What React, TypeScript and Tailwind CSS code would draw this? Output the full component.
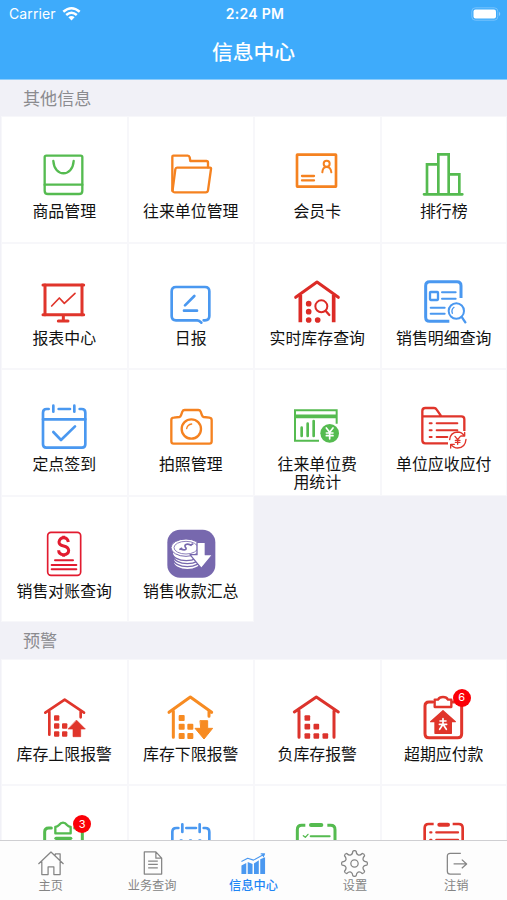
import { ReactNode } from "react";
import { twMerge } from "tailwind-merge";

type Tile = {
  label: string;
  icon: ReactNode;
  badge?: number;
};

const GREEN = "#55bb50";
const ORANGE = "#f58220";
const RED = "#e0352b";
const BLUE = "#4a98f0";

const Glyph = ({
  color,
  width = 7,
  children,
}: {
  color: string;
  width?: number;
  children: ReactNode;
}) => (
  <svg
    className="w-12 h-12 overflow-visible"
    viewBox="0 0 144 144"
    fill="none"
    stroke={color}
    strokeWidth={width}
    strokeLinecap="round"
    strokeLinejoin="round"
    aria-hidden="true"
  >
    {children}
  </svg>
);

const Squares = ({
  points,
  size,
  color,
}: {
  points: number[][];
  size: number;
  color: string;
}) => (
  <g fill={color} stroke="none">
    {points.map(([x, y]) => (
      <rect
        key={`${x}-${y}`}
        x={x - size / 2}
        y={y - size / 2}
        width={size}
        height={size}
        rx="3"
      />
    ))}
  </g>
);

const BagIcon = () => (
  <Glyph color={GREEN}>
    <path d="M19 17H122q5 0 5 5V122q0 10-10 10H24q-10 0-10-10V22q0-5 5-5Z" />
    <path d="M14 104H127M40 33C43 82 98 82 101 33" />
  </Glyph>
);

const FolderIcon = () => (
  <Glyph color={ORANGE}>
    <path d="M16 122V20q0-3 3-3H62q5 0 6 5l2 11H118q5 0 5 5V52" />
    <path d="M30 53H129q4 0 3 4L123 121q-1 6-7 6H23q-7 0-6-8L25 58q1-5 5-5Z" />
  </Glyph>
);

const CardIcon = () => (
  <Glyph color={ORANGE}>
    <rect x="12" y="14" width="117" height="96" rx="1" strokeWidth="8" />
    <path d="M27 78H63M27 91H63" />
    <g strokeWidth="6">
      <circle cx="101" cy="41" r="9" />
      <path d="M88 67q1-16 13-16t14 16" />
    </g>
  </Glyph>
);

const RankIcon = () => (
  <Glyph color={GREEN} width={8}>
    <path
      d="M12 133H127M21 133V43H55M55 133V13H86V133M86 73H118V133"
      strokeLinejoin="miter"
    />
  </Glyph>
);

const BoardIcon = () => (
  <Glyph color={RED} width={9}>
    <path d="M9 24H131M9 113H131M70 114V130M55 132H84" />
    <path d="M15 24V113M126 24V113" />
    <path d="M35 87L58 63L73 79L105 49" strokeWidth="5" />
  </Glyph>
);

const DiaryIcon = () => (
  <Glyph color={BLUE} width={8}>
    <path d="M110 130H114q13 0 13-13V43q0-13-13-13H27q-13 0-13 13V117q0 13 13 13H91q6 0 12 7" />
    <path d="M54 85L82 57M51 101H90" />
  </Glyph>
);

const StockSearchIcon = () => (
  <Glyph color="#dc2b26" width={9}>
    <path d="M8 61L72 15L136 61" />
    <path d="M22 54V136M122 54V136" strokeLinecap="butt" strokeWidth="11" />
    <g fill="#dc2b26" stroke="none">
      <circle cx="47" cy="80" r="8.5" />
      <circle cx="47" cy="104" r="8.5" />
      <circle cx="47" cy="129" r="8.5" />
      <circle cx="74" cy="129" r="8.5" />
    </g>
    <circle cx="85" cy="88" r="18" strokeWidth="6" />
    <path d="M99 103L109 114" strokeWidth="7" />
  </Glyph>
);

const SalesDetailIcon = () => (
  <Glyph color={BLUE} width={9}>
    <path
      d="M123 63V26q0-12-12-12H29q-12 0-12 12V121q0 12 12 12H88"
      strokeLinecap="butt"
    />
    <g strokeWidth="6">
      <rect x="30" y="45" width="24" height="24" rx="2" strokeWidth="7" />
      <path d="M66 46H107M66 65H107M32 92H74M32 110H74" />
      <circle cx="109" cy="102" r="23" />
      <path d="M97 109q-4-11 5-18" strokeWidth="4" />
      <path d="M126 121L136 136" strokeWidth="7" />
    </g>
  </Glyph>
);

const CheckInIcon = () => (
  <Glyph color={BLUE} width={8}>
    <path d="M26 18H20q-11 0-11 11V124q0 10 10 10H126q10 0 10-10V29q0-11-11-11H119M56 18H90" />
    <path d="M40 8V26M103 8V26M9 49H136" />
    <path d="M40 87L63 111L105 70" />
  </Glyph>
);

const CameraIcon = () => (
  <Glyph color={ORANGE} width={7}>
    <path d="M20 44L37 42q4-1 5-5l4-11q2-5 7-5H94q5 0 7 5l4 11q1 4 5 5l17 2q7 1 7 7V115q0 7-7 7H20q-7 0-7-7V51q0-7 7-7Z" />
    <circle cx="73" cy="78" r="29" />
    <path d="M59 77q2-12 15-14" strokeWidth="4" />
  </Glyph>
);

const CostStatsIcon = () => (
  <Glyph color={GREEN} width={6}>
    <path
      d="M78 113H6V22H131V62"
      strokeLinecap="butt"
      strokeLinejoin="miter"
    />
    <path d="M6 40H131" strokeWidth="11" strokeLinecap="butt" />
    <path d="M26 74V99M44 62V99M62 54V99" strokeWidth="8" />
    <circle cx="110" cy="91" r="28" fill={GREEN} stroke="none" />
    <path
      d="M100 75L110 88L120 75M110 89V108M100 90H120M100 98H120"
      stroke="#fff"
      strokeWidth="5"
    />
  </Glyph>
);

const ReceivableIcon = () => (
  <Glyph color={RED}>
    <path
      d="M84 121H16q-9 0-9-9V24q0-9 9-9H42q5 0 8 5l14 20H124q9 0 9 9V84M7 40H64"
      strokeLinecap="butt"
    />
    <path
      d="M29 61H35M29 82H35M29 102H35M50 61H112M50 82H112M50 102H82"
      strokeWidth="6"
    />
    <g strokeWidth="4">
      <path d="M89 110q2-22 24-23q12 0 20 11M134 88V99H123" />
      <path d="M138 109q-2 25-25 26q-12 0-20-11M92 135V124H103" />
      <path d="M105 100L113 110L121 100M113 110V124M106 112H120M106 118H120" />
    </g>
  </Glyph>
);

const StatementIcon = () => (
  <Glyph color="#e21b2f" width={5}>
    <rect x="23" y="7" width="99" height="129" rx="10" />
    <path
      d="M85 36q-2-13-14-13t-14 13q0 9 14 12t15 13q0 13-15 13t-15-13M71 17V24M71 74V80"
      strokeWidth="9"
      strokeLinecap="butt"
    />
    <path d="M45 91H99M35 105H109M35 118H109" strokeWidth="6" />
  </Glyph>
);

const CollectionIcon = () => (
  <Glyph color="#fff" width={4}>
    <rect
      x="1"
      y="-1"
      width="144"
      height="144"
      rx="38"
      fill="#7768ae"
      stroke="none"
    />
    {[95, 86, 77, 68].map((y) => (
      <ellipse
        key={y}
        cx={y > 70 ? 61 : 58}
        cy={y}
        rx="42"
        ry="24"
        fill="#fff"
        stroke="#7768ae"
      />
    ))}
    <ellipse
      cx="57"
      cy="53"
      rx="45"
      ry="26"
      fill="#fff"
      stroke="#7768ae"
      strokeWidth="3"
    />
    <ellipse
      cx="57"
      cy="53"
      rx="36"
      ry="19"
      stroke="#7768ae"
      strokeWidth="2.5"
    />
    <path
      d="M72 46q-13-7-18 0q-1 4 3 8q2 9-17 3M39 58l5-3M71 45l6-3"
      stroke="#7768ae"
      strokeWidth="5"
    />
    <path
      d="M90 37H115V74H137L103 115L69 74H90Z"
      fill="#fff"
      stroke="#7768ae"
      strokeWidth="4"
    />
  </Glyph>
);

const StockUpperIcon = () => (
  <Glyph color={RED} width={8}>
    <path d="M16 59L74 20L132 59M28 56V125M122 56V73" />
    <Squares
      color={RED}
      size={16}
      points={[
        [50, 75],
        [50, 99],
        [50, 123],
        [74, 99],
        [74, 123],
      ]}
    />
    <path
      d="M110 82L136 108H122V131H99V108H85Z"
      fill={RED}
      strokeWidth="2"
    />
  </Glyph>
);

const StockLowerIcon = () => (
  <Glyph color="#f78b22" width={9}>
    <path d="M6 58L70 12L134 58M19 54V133M126 54V70" />
    <Squares
      color="#f78b22"
      size={18}
      points={[
        [44, 75],
        [44, 101],
        [44, 129],
        [70, 101],
        [70, 129],
      ]}
    />
    <path
      d="M100 83H122V106H137L111 138L84 106H100Z"
      fill="#f78b22"
      strokeWidth="3"
    />
  </Glyph>
);

const StockNegativeIcon = () => (
  <Glyph color="#dc332c" width={9}>
    <path d="M4 57L70 12L136 57M18 53V133M123 53V133" />
    <Squares
      color="#dc332c"
      size={17}
      points={[
        [43, 75],
        [43, 101],
        [43, 129],
        [70, 101],
        [70, 129],
        [97, 129],
      ]}
    />
  </Glyph>
);

const OverdueIcon = () => (
  <Glyph color={RED} width={9}>
    <path d="M38 27H27q-12 0-12 12V122q0 12 12 12H113q12 0 12-12V39q0-12-12-12H98" />
    <path
      d="M44 42V20H54q4-8 15-8t15 8H94V42Z"
      fill="#fff"
      strokeWidth="7"
    />
    <path
      d="M69 53L106 86H94V121H45V86H32Z"
      fill={RED}
      strokeWidth="4"
    />
    <path
      d="M60 84H78M58 94H80M69 77V94L59 109M69 94L79 109"
      stroke="#fff"
      strokeWidth="5"
    />
  </Glyph>
);

const ClipGreenIcon = () => (
  <Glyph color={GREEN} width={9}>
    <path d="M34 27H26q-12 0-12 12V130H127V39q0-12-12-12H104" />
    <path
      d="M46 43V24q7-1 11-6q5-7 12-7t12 7q4 5 11 6V43Z"
      fill="#fff"
      strokeWidth="7"
    />
    <path d="M48 58H92" strokeWidth="10" />
  </Glyph>
);

const CalendarIcon = () => (
  <Glyph color={BLUE} width={8}>
    <path d="M34 27H28q-12 0-12 12V130H127V39q0-12-12-12H110M58 27H87" />
    <path d="M46 16V39M98 16V39" />
    <path d="M41 65H44M69 65H72M97 65H100" />
  </Glyph>
);

const ChecklistIcon = () => (
  <Glyph color={GREEN} width={9}>
    <path
      d="M37 19H26q-13 0-13 13V130H126V32q0-13-13-13H103"
      strokeLinecap="butt"
    />
    <path d="M54 18H85" strokeWidth="12" />
    <path d="M31 50L37 55L45 46" strokeWidth="4" />
    <path d="M53 52H110" strokeWidth="6" />
  </Glyph>
);

const ListIcon = () => (
  <Glyph color={RED} width={8}>
    <path
      d="M41 15H26q-12 0-12 12V130H128V27q0-12-12-12H98"
      strokeLinecap="butt"
    />
    <path d="M58 17H84" strokeWidth="12" />
    <path d="M31 40H34M49 40H114M31 63H34M49 63H114" strokeWidth="7" />
  </Glyph>
);

const otherTiles: Tile[] = [
  { label: "商品管理", icon: <BagIcon /> },
  { label: "往来单位管理", icon: <FolderIcon /> },
  { label: "会员卡", icon: <CardIcon /> },
  { label: "排行榜", icon: <RankIcon /> },
  { label: "报表中心", icon: <BoardIcon /> },
  { label: "日报", icon: <DiaryIcon /> },
  { label: "实时库存查询", icon: <StockSearchIcon /> },
  { label: "销售明细查询", icon: <SalesDetailIcon /> },
  { label: "定点签到", icon: <CheckInIcon /> },
  { label: "拍照管理", icon: <CameraIcon /> },
  { label: "往来单位费\n用统计", icon: <CostStatsIcon /> },
  { label: "单位应收应付", icon: <ReceivableIcon /> },
  { label: "销售对账查询", icon: <StatementIcon /> },
  { label: "销售收款汇总", icon: <CollectionIcon /> },
];

// the last row is cut off by the tab bar, its labels are never visible
const warningTiles: Tile[] = [
  { label: "库存上限报警", icon: <StockUpperIcon /> },
  { label: "库存下限报警", icon: <StockLowerIcon /> },
  { label: "负库存报警", icon: <StockNegativeIcon /> },
  { label: "超期应付款", icon: <OverdueIcon />, badge: 6 },
  { label: "", icon: <ClipGreenIcon />, badge: 3 },
  { label: "", icon: <CalendarIcon /> },
  { label: "", icon: <ChecklistIcon /> },
  { label: "", icon: <ListIcon /> },
];

const tabs = [
  {
    label: "主页",
    icon: (
      <path d="M1.5 14.5L14.5 2L27.5 14.5M5 12V25.5H11.5V17.5H17.5V25.5H24V12M19 5.5V4H24V10.5" />
    ),
  },
  {
    label: "业务查询",
    icon: (
      <path d="M5.5 2H17.5L23.5 8.5V25H5.5ZM17.5 2V8.5H23.5M9.5 11.5H19.5M9.5 15H19.5M9.5 18.5H19.5" />
    ),
  },
  {
    label: "信息中心",
    active: true,
    icon: (
      <g className="text-[#4a98f0]">
        <path
          d="M1.5 25V16L6.5 13.5V25ZM8 25V12.5L13 14.5V25ZM14.5 25V14L19.5 10.5V25ZM21 25V9.5L26 7.5V25Z"
          fill="currentColor"
          stroke="none"
        />
        <path
          d="M1.5 12L8 8.5L14 10.5L25 4.5M21.5 4H25.5L24 7.5"
          stroke="currentColor"
          strokeWidth="1.1"
        />
      </g>
    ),
  },
  {
    label: "设置",
    icon: (
      <>
        <path d="M12.3 1.2Q14 0 15.7 1.2Q16 4.6 17.8 5.1Q19.8 5.9 22 3.6Q24.3 4 24.5 6Q22.2 8.4 23 10.3Q23.6 12.2 26.8 12.3Q28 14 26.8 15.7Q23.6 15.9 23 17.7Q22.2 19.7 24.5 22Q24.3 24.2 22 24.4Q19.8 22.2 17.8 22.9Q16 23.6 15.7 26.8Q14 28 12.3 26.8Q12 23.6 10.2 22.9Q8.2 22.2 6 24.4Q3.8 24.2 3.6 22Q5.8 19.7 5 17.7Q4.4 15.9 1.2 15.7Q0 14 1.2 12.3Q4.4 12.2 5 10.3Q5.8 8.4 3.6 6Q3.8 4 6 3.6Q8.2 5.9 10.2 5.1Q12 4.6 12.3 1.2Z" />
        <circle cx="14" cy="14" r="3.8" />
      </>
    ),
  },
  {
    label: "注销",
    icon: (
      <path d="M18.5 3.5H7.5Q4.5 3.5 4.5 6.5V22Q4.5 25 7.5 25H18.5M11 14.5H24.5M19.5 10L24.5 14.5L19.5 19" />
    ),
  },
];

const SectionTitle = ({ children }: { children: ReactNode }) => (
  <h2 className="h-[36.5px] shrink-0 pl-[23px] text-[17.1px] leading-[37px] text-[#8b8b8f]">
    {children}
  </h2>
);

const TileGrid = ({ tiles }: { tiles: Tile[] }) => (
  <div className="grid grid-cols-4 auto-rows-[126.5px] pl-[1px]">
    {tiles.map((tile, index) => (
      <div
        key={index}
        className="flex flex-col items-center border border-[#f7f7fa] bg-white pt-[33px]"
      >
        <div className="relative w-12 h-12">
          {tile.icon}
          {tile.badge && (
            <span className="absolute -top-[4px] left-[33px] flex h-[18px] w-[18px] items-center justify-center rounded-full bg-[#fb0007] text-[11px] text-white">
              {tile.badge}
            </span>
          )}
        </div>
        <p className="mt-[5px] text-center text-[15.9px] leading-[18px] whitespace-pre text-[#111]">
          {tile.label}
        </p>
      </div>
    ))}
  </div>
);

const App = () => {
  return (
    <div className="flex h-[900px] w-full flex-col overflow-hidden bg-[#f1f1f7] font-['Inter','Noto_Sans_CJK_SC',sans-serif]">
      <header className="h-[79.5px] shrink-0 border-b border-[#8ccdfb] bg-[#3eabfb] text-white">
        <div className="grid h-[27px] grid-cols-3 items-center pr-[6px] pl-[9px]">
          <div className="flex items-center gap-[6px] text-[14px] tracking-[0.1px]">
            <span>Carrier</span>
            <svg className="h-[14px] w-[19px]" viewBox="0 0 19 14" fill="none">
              <path
                d="M1.3 4.8Q9.5 -2.2 17.7 4.8M4.2 8Q9.5 3.4 14.8 8"
                stroke="#fff"
                strokeWidth="2.5"
              />
              <path d="M6.4 10.2Q9.5 7.6 12.6 10.2L9.5 13.4Z" fill="#fff" />
            </svg>
          </div>
          <span className="text-center text-[14px] font-semibold tracking-[0.3px]">
            2:24 PM
          </span>
          <svg
            className="h-[14px] w-[30px] justify-self-end"
            viewBox="0 0 30 14"
            fill="none"
          >
            <rect
              x="0.8"
              y="0.8"
              width="26"
              height="12.4"
              rx="3.5"
              stroke="#76c2fc"
            />
            <rect x="2.5" y="2.5" width="22.5" height="9" rx="2" fill="#fff" />
            <path d="M28 4.8Q30.5 7 28 9.2Z" fill="#8fcdfc" />
          </svg>
        </div>
        <h1 className="text-center text-[20.8px] leading-[52px] font-medium">
          信息中心
        </h1>
      </header>

      <main className="min-h-0 grow overflow-hidden">
        <SectionTitle>其他信息</SectionTitle>
        <TileGrid tiles={otherTiles} />
        <SectionTitle>预警</SectionTitle>
        <TileGrid tiles={warningTiles} />
      </main>

      <nav className="grid h-[60px] shrink-0 grid-cols-5 border-t border-[#cfcfd2] bg-[#fdfdfd]">
        {tabs.map((tab) => (
          <div
            key={tab.label}
            className={twMerge(
              "flex flex-col items-center pt-[9px] text-[#858585]",
              tab.active ? "font-medium text-[#1f86f5]" : ""
            )}
          >
            <svg
              className="w-[27px] h-[27px]"
              viewBox="0 0 28 28"
              fill="none"
              stroke="currentColor"
              strokeWidth="1.3"
              strokeLinejoin="round"
            >
              {tab.icon}
            </svg>
            <span className="text-[12.2px] leading-[17px]">{tab.label}</span>
          </div>
        ))}
      </nav>
    </div>
  );
};

export default App;
